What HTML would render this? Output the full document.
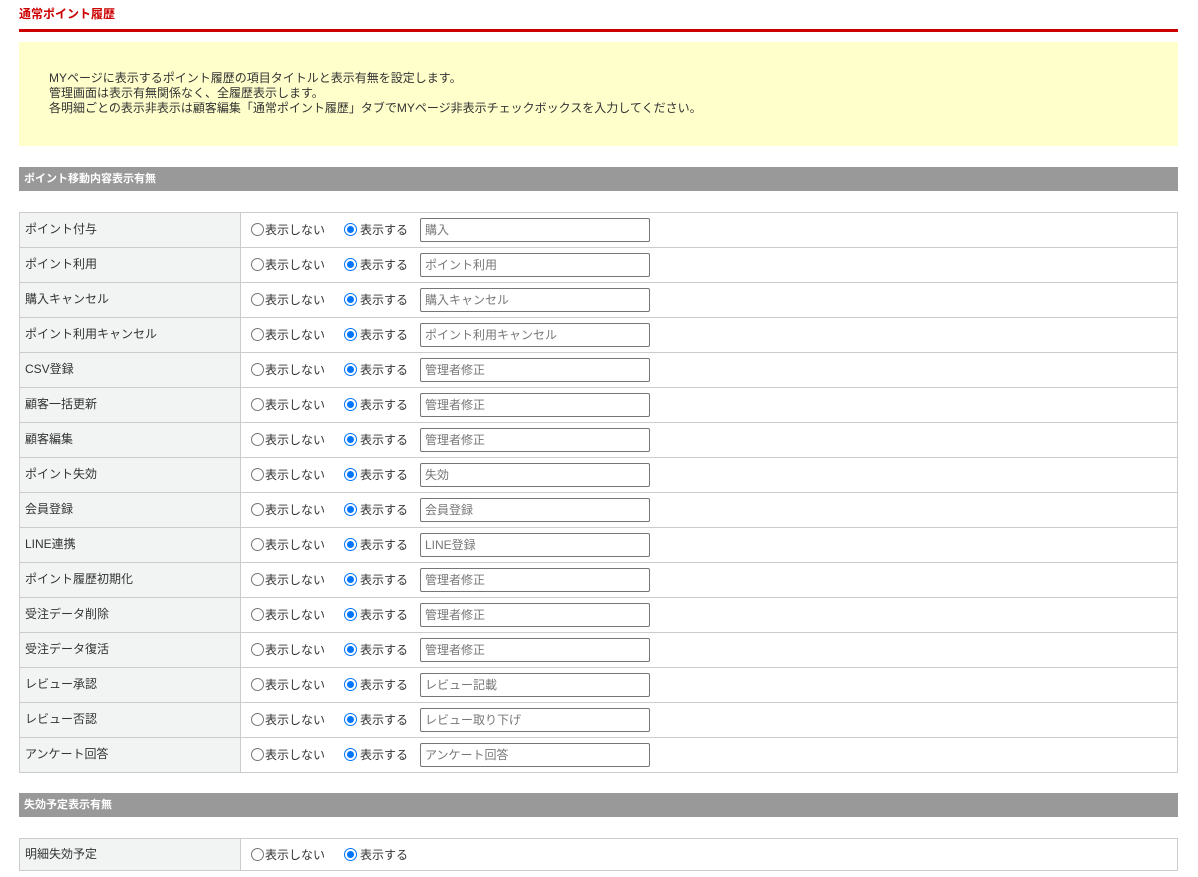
<!DOCTYPE html>
<html><head><meta charset="utf-8"><style>
body{margin:0;background:#fff;font-family:"Liberation Sans","Noto Sans CJK JP",sans-serif;font-size:12px;color:#333;}
h1{position:absolute;left:19px;top:6px;margin:0;font-size:12px;color:#c00;font-weight:bold;line-height:16px;}
.red{position:absolute;left:19px;top:29px;width:1159px;height:3px;background:#c00;}
.note{position:absolute;left:19px;top:42px;width:1159px;height:104px;background:#ffffcc;}
.note p{margin:0;position:absolute;left:30px;top:29px;line-height:15px;color:#333;}
.hd{position:absolute;left:19px;width:1159px;height:24px;background:#999;color:#fff;font-weight:bold;font-size:11px;line-height:24px;}
.hd span{padding-left:5px;}
table{position:absolute;left:19px;width:1159px;border-collapse:collapse;}
td{border:1px solid #ccc;height:35px;padding:0;box-sizing:border-box;}
td.l{width:221px;background:#f2f4f4;padding-left:5px;padding-bottom:3px;}
.r{position:relative;}
.c{position:absolute;top:50%;margin-top:-7px;width:11px;height:11px;border:1px solid #767676;border-radius:50%;background:#fff;}
.c.on{border-color:#0075ff;}
.c.on::after{content:"";position:absolute;left:2px;top:2px;width:7px;height:7px;border-radius:50%;background:#0075ff;}
.t{position:absolute;top:50%;margin-top:-8px;line-height:16px;}
.in{position:absolute;top:5px;left:179px;width:230px;height:24px;box-sizing:border-box;border:1px solid #767676;border-radius:2px;color:#777;padding-left:4px;line-height:22px;}
tr.s td{height:32px;}
</style></head><body>
<h1>通常ポイント履歴</h1>
<div class="red"></div>
<div class="note"><p>MYページに表示するポイント履歴の項目タイトルと表示有無を設定します。<br>管理画面は表示有無関係なく、全履歴表示します。<br>各明細ごとの表示非表示は顧客編集「通常ポイント履歴」タブでMYページ非表示チェックボックスを入力してください。</p></div>
<div class="hd" style="top:167px"><span>ポイント移動内容表示有無</span></div>
<table style="top:212px">
<tbody id="tb"></tbody>
</table>
<div class="hd" style="top:793px"><span>失効予定表示有無</span></div>
<table style="top:838px"><tr class="s"><td class="l">明細失効予定</td><td class="r"><span class="c" style="left:10px"></span><span class="t" style="left:24px">表示しない</span><span class="c on" style="left:103px"></span><span class="t" style="left:119px">表示する</span></td></tr></table>
<script>
var d=[["ポイント付与","購入"],["ポイント利用","ポイント利用"],["購入キャンセル","購入キャンセル"],["ポイント利用キャンセル","ポイント利用キャンセル"],["CSV登録","管理者修正"],["顧客一括更新","管理者修正"],["顧客編集","管理者修正"],["ポイント失効","失効"],["会員登録","会員登録"],["LINE連携","LINE登録"],["ポイント履歴初期化","管理者修正"],["受注データ削除","管理者修正"],["受注データ復活","管理者修正"],["レビュー承認","レビュー記載"],["レビュー否認","レビュー取り下げ"],["アンケート回答","アンケート回答"]];
var h="";d.forEach(function(r){h+='<tr><td class="l">'+r[0]+'</td><td class="r"><span class="c" style="left:10px"></span><span class="t" style="left:24px">表示しない</span><span class="c on" style="left:103px"></span><span class="t" style="left:119px">表示する</span><span class="in">'+r[1]+'</span></td></tr>';});
document.getElementById("tb").innerHTML=h;
</script>
</body></html>
